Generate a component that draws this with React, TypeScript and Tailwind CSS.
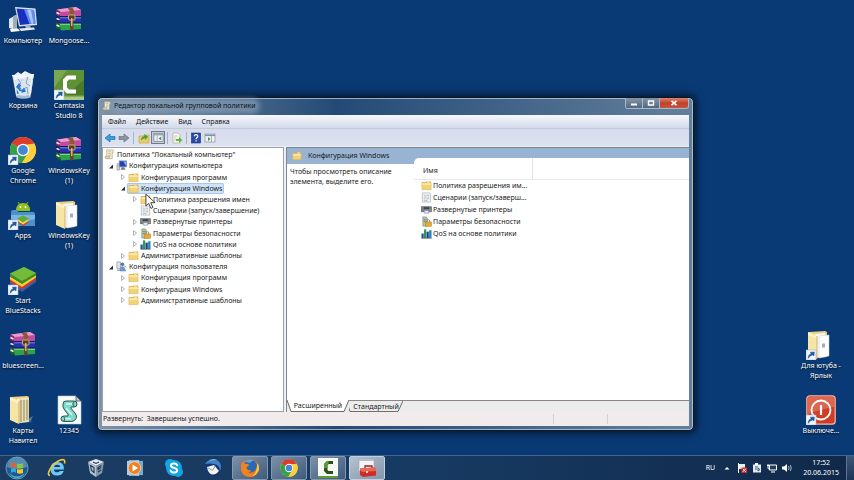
import React from "react";

type IconProps = { className?: string };

/* ---------- desktop icons (30 x 30 art boards) ---------- */

function ShortcutArrow({ x = 0, y = 20 }: { x?: number; y?: number }) {
  return (
    <g transform={`translate(${x} ${y})`}>
      <rect width="10" height="10" fill="#f2f6fb" stroke="#a9b7c9" strokeWidth=".6" />
      <path d="M2.200 8.400C2 5.600 3.400 4.100 5.200 4L4.400 2.200 8.300 2 8 6 6.800 4.900C4.900 5.300 3.600 6.300 2.200 8.400Z" fill="#1e5a9e" stroke="#1e5a9e" strokeWidth=".5" />
    </g>
  );
}

function ComputerIcon({ className }: IconProps) {
  return (
    <svg viewBox="0 0 30 30" className={className} aria-hidden="true">
      <path d="M1 14l7-4v15l-7-2z" fill="#dfe6ec" />
      <path d="M5 11l4-1v14l-4 0z" fill="#9eabb8" />
      <path d="M7 2l20.500 1.500L29 20l-18 1.500z" fill="#dbe4ec" />
      <path d="M8.500 3.500L26 5l1.500 13.500L12 20z" fill="#1a2fc0" />
      <path d="M16 4.200L26 5l1.500 13.500-6 .6z" fill="#5f8df0" />
      <path d="M19 4.500l4 .3 2.600 13.900-2 .2z" fill="#a9c6fb" />
      <path d="M17 21l5-.5 1 3h-5z" fill="#aab4be" />
      <path d="M11 23.500l15-1 1 2-14 1.500z" fill="#e6ebef" />
      <path d="M2 24l8-.5 2 2.500-9 1z" fill="#f5f7f9" />
    </svg>
  );
}

function RarIcon({ className }: IconProps) {
  return (
    <svg viewBox="0 0 30 30" className={className} aria-hidden="true">
      <path d="M3 4.500L22 2l5 3v6H5z" fill="#c24a9f" />
      <path d="M3 4.500L22 2l5 3L7 7z" fill="#ec9cd0" />
      <path d="M2 4.500l4 2V12l-4-2z" fill="#7a2668" />
      <path d="M5 12h22v5.500H5z" fill="#2a2fb8" />
      <path d="M5 12h22v1.300H5z" fill="#7d86ee" />
      <path d="M2 10.500l4 2v5l-4-1.500z" fill="#191d70" />
      <path d="M5 18.500h22v5.500l-20 1.500z" fill="#2ea24a" />
      <path d="M5 18.500h22v1.300H5z" fill="#8adf92" />
      <path d="M2 17l4 2v6.500L2 23z" fill="#15601f" />
      <path d="M2.500 7.500l3 1.500M2.500 13.500l3 1.200M2.500 20l3 1.500" stroke="#f0e8f0" strokeWidth="1.600" />
      <path d="M5.500 11.800H27M5.500 18H27" stroke="#17132e" strokeWidth=".8" />
      <path d="M13.500 3.200l5-.7 1.500 3V11l-4.500 1V5.500z" fill="#8a5a34" />
      <path d="M16 12l3.500-1v14l-3.500.4z" fill="#6b4526" />
      <rect x="14.500" y="10" width="6.500" height="5" rx="1" fill="#5a3c20" stroke="#d3b98a" strokeWidth=".9" />
      <path d="M17.800 13v8" stroke="#ead9ac" strokeWidth="1.100" />
    </svg>
  );
}

function BinIcon({ className }: IconProps) {
  return (
    <svg viewBox="0 0 30 30" className={className} aria-hidden="true">
      <path d="M4 5l22-1-3.500 23.500q-7 2.500-14 0z" fill="#b7c9dc" opacity=".9" />
      <path d="M5 6l5-4 3 2 4-3 4 2 5 2-1 4-19 1z" fill="#eef3f8" />
      <path d="M6 11l5-3 3 3 4-4 7 3-2 14-6 2-8-1z" fill="#dbe5ef" />
      <path d="M10 9l3 4-4 3M20 7l-2 6 4 3M14 20l5-3 1 7" stroke="#8ba0b5" strokeWidth="1" fill="none" />
      <path d="M8 17l3-4 2.500 3-1.500.6 1 2.400-2 1zM16 17.500l2 4-4.500 1.500.3-1.500-2.800-.5.500-2 3 .7zM8.500 19l2.500 4.500-2 .5z" fill="#2b78d0" />
      <path d="M4 5.500q11 3 22-1" stroke="#f8fbfd" strokeWidth="1.200" fill="none" />
      <path d="M6 8l2.500 18M24 7.500L21.500 26" stroke="#f6f9fc" strokeWidth=".8" />
    </svg>
  );
}

function CamtasiaIcon({ className }: IconProps) {
  return (
    <svg viewBox="0 0 30 30" className={className} aria-hidden="true">
      <rect width="30" height="30" fill="#5f9136" />
      <path d="M0 0h13L0 18z" fill="#7aa651" />
      <path d="M30 10v15H12z" fill="#4c7a2a" />
      <path d="M22 5.500H13l-4 4v10l4 4h9v-4h-7l-2-2v-6l2-2h7z" fill="#fff" />
      <rect y="26.500" width="30" height="3.500" fill="#a9c98c" />
      <ShortcutArrow />
    </svg>
  );
}

function ChromeMark() {
  return (
    <g>
      <circle cx="15" cy="15" r="13" fill="#fbd03b" />
      <path d="M15 15L3.740 8.500A13 13 0 0 1 26.260 8.500L26.200 9.500H15Z" fill="#dd3b2c" />
      <path d="M3.740 8.500A13 13 0 0 0 14 28L20 18 15 15z" fill="#35a14a" />
      <path d="M26.260 8.500A13 13 0 0 1 14 28L20.200 18 20 9.500z" fill="#fbd03b" />
      <circle cx="15" cy="15" r="6.200" fill="#fff" />
      <circle cx="15" cy="15" r="4.900" fill="#4286d6" />
    </g>
  );
}

function ChromeDesktopIcon({ className }: IconProps) {
  return (
    <svg viewBox="0 0 30 30" className={className} aria-hidden="true">
      <ChromeMark />
      <ShortcutArrow />
    </svg>
  );
}

function AppsIcon({ className }: IconProps) {
  return (
    <svg viewBox="0 0 30 30" className={className} aria-hidden="true">
      <path d="M8 11q0-8 7-8t7 8z" fill="#93c021" />
      <path d="M10 2l2 3M20 2l-2 3" stroke="#93c021" strokeWidth="1" />
      <circle cx="12.500" cy="7" r=".9" fill="#fff" />
      <circle cx="17.500" cy="7" r=".9" fill="#fff" />
      <path d="M3 12q0-2 2-2h4l1 2h15q2 0 2 2v12H3z" fill="#4a92c9" />
      <path d="M3 15h24v4q-12 4-24 0z" fill="#78b5df" />
      <path d="M9 22l6-3 6 3-6 4z" fill="#d3402e" />
      <path d="M9 20.500l6-3 6 3-6 4z" fill="#f5d84b" />
      <path d="M9 18.500l6-3 6 3-6 4z" fill="#5fab33" />
      <ShortcutArrow />
    </svg>
  );
}

function OpenFolder({ arrow = false, full = false, className }: IconProps & { arrow?: boolean; full?: boolean }) {
  return (
    <svg viewBox="0 0 30 30" className={className} aria-hidden="true">
      <path d="M3 2l16-1 2 1v25l-13 1z" fill="#ecd27c" />
      <path d="M9 4l10-1v23l-9 2z" fill="#f7f8fa" />
      {full ? (
        <g>
          <path d="M11 4l9-1v24l-9 1z" fill="#e9dfb8" />
          <path d="M13 5v22M16 5v21M19 5v20" stroke="#9a8a63" strokeWidth="1.100" />
          <path d="M20 24l5-3-3 7z" fill="#9fb6cf" opacity=".5" />
        </g>
      ) : (
        <g>
          <path d="M13 6l10-1v21l-10 2z" fill="#fdfdfd" stroke="#c5ccd4" strokeWidth=".5" />
          <path d="M16 13.500h3v4h-3z" fill="#9dacbe" />
        </g>
      )}
      <path d="M2 2l9 4v23l-9-4z" fill="#f6e5a4" />
      <path d="M2 2l9 4v3L2 5z" fill="#fcf3c8" />
      <path d="M11 6v23" stroke="#c7a44b" strokeWidth=".8" />
      {arrow && <ShortcutArrow />}
    </svg>
  );
}

function BlueStacksIcon({ className }: IconProps) {
  return (
    <svg viewBox="0 0 30 30" className={className} aria-hidden="true">
      <path d="M2 16l12 7 14-9v3L14 27 2 19z" fill="#2b63b5" />
      <path d="M2 14l12 7 14-9v3L14 24.500 2 17z" fill="#d53427" />
      <path d="M2 11.500l12 7 14-9v3L14 22 2 14.500z" fill="#f5cf32" />
      <path d="M2 8.500L16 2l12 6v2.500L14 19 2 11.500z" fill="#3f8b2b" />
      <path d="M2 8.500L16 2l12 6-14 8z" fill="#75bb3a" />
      <ShortcutArrow />
    </svg>
  );
}

function ScriptIcon({ className }: IconProps) {
  return (
    <svg viewBox="0 0 30 30" className={className} aria-hidden="true">
      <path d="M4 1h18l5 5v23H4z" fill="#fafcfc" stroke="#bcc6cc" strokeWidth=".6" />
      <path d="M22 1v5h5z" fill="#c8d2da" stroke="#3b4750" strokeWidth=".8" />
      <path d="M9 9q0-3 3-3h8q3 0 3 3t-3 3h-3q-1 .5 1 2.500l3 3.500q2.500 3 1 5.500-1.500 3-4.500 3H10q-3 0-3-2.800t3-2.700h4q1-.8-1-3l-3-4q-1.500-2-1-5z" fill="#7fd8cc" stroke="#15463f" strokeWidth=".9" />
      <path d="M12 9h6M12 13l6 7M11 23.700h6" stroke="#d9fbf5" strokeWidth="1.300" />
      <path d="M20 6.500q-2.500 2 0 5M9.500 21.500q2.500 1.500.5 4.500" stroke="#15463f" strokeWidth=".8" fill="none" />
    </svg>
  );
}

function PowerIcon({ className }: IconProps) {
  return (
    <svg viewBox="0 0 30 30" className={className} aria-hidden="true">
      <rect x=".8" y=".8" width="28.400" height="28.400" rx="3" fill="#cf3d27" stroke="#f3b7a7" strokeWidth="1.200" />
      <path d="M2 3q0-1.500 1.500-1.500h23Q28 1.500 28 3v9Q15 14 2 19z" fill="#dc6650" />
      <circle cx="15" cy="15" r="9.500" fill="none" stroke="#fff" strokeWidth="1.800" />
      <path d="M15 10v10" stroke="#fff" strokeWidth="2.200" />
      <ShortcutArrow />
    </svg>
  );
}

/* ---------- console icons (12 x 12 art boards) ---------- */

function FolderIcon({ className }: IconProps) {
  return (
    <svg viewBox="0 0 12 12" className={className} aria-hidden="true">
      <path d="M1 2.500h4l1-1h5v2H1z" fill="#d9ab45" />
      <path d="M1 3h10v7.500H1z" fill="#f3d377" stroke="#d9b052" strokeWidth=".6" />
      <path d="M1.500 3.500h9v2h-9z" fill="#fbe9ae" />
      <path d="M6.500 1.800h3v1h-3z" fill="#fff6d8" />
    </svg>
  );
}

function ScrollIcon({ className }: IconProps) {
  return (
    <svg viewBox="0 0 12 12" className={className} aria-hidden="true">
      <path d="M3 1h7v3H9v6.500H2V8h1z" fill="#f4eed8" stroke="#a69d80" strokeWidth=".7" />
      <path d="M4.500 3h3M4.500 5h3M4.500 7h3" stroke="#b5a982" strokeWidth=".7" />
      <path d="M1 8h5v2.500H2q-1-.5-1-2.500z" fill="#dfd4ae" stroke="#a69d80" strokeWidth=".5" />
    </svg>
  );
}

function PcConfigIcon({ className }: IconProps) {
  return (
    <svg viewBox="0 0 12 12" className={className} aria-hidden="true">
      <path d="M1 4h3v7H1z" fill="#c8d0d8" stroke="#6d7883" strokeWidth=".5" />
      <rect x="3.500" y="1" width="8" height="6.500" fill="#2343b8" stroke="#8494ac" strokeWidth=".8" />
      <path d="M8 1.500h3v5z" fill="#8fb2f2" />
      <path d="M6 8h3l1.500 2.500H5z" fill="#717e8d" />
    </svg>
  );
}

function UserConfigIcon({ className }: IconProps) {
  return (
    <svg viewBox="0 0 12 12" className={className} aria-hidden="true">
      <rect x="1" y="1" width="4" height="7" fill="#dce3ea" stroke="#75828f" strokeWidth=".6" />
      <circle cx="7" cy="3.500" r="2" fill="#5d7898" />
      <path d="M4.500 11q0-5 2.500-5t3.500 5z" fill="#6f9bd2" stroke="#4b688b" strokeWidth=".4" />
      <path d="M9 5l2 2M1 10h4" stroke="#5f6f80" strokeWidth=".9" />
    </svg>
  );
}

function DocScriptIcon({ className }: IconProps) {
  return (
    <svg viewBox="0 0 12 12" className={className} aria-hidden="true">
      <path d="M1.500 1h8l1 1v9h-9z" fill="#f5f6f6" stroke="#a5abb0" strokeWidth=".7" />
      <path d="M3 3.500h2M6 3.500h3M3 5.500h3M7 5.500h2M3 7.500h2M6 7.500h3M3 9.500h4" stroke="#9ba4ab" strokeWidth=".8" />
    </svg>
  );
}

function PrinterIcon({ className }: IconProps) {
  return (
    <svg viewBox="0 0 12 12" className={className} aria-hidden="true">
      <rect x=".5" y="3" width="11" height="5.500" fill="#7d848c" stroke="#4b5158" strokeWidth=".6" />
      <path d="M3 3.500h6v2H3z" fill="#3c4248" />
      <path d="M3.500 7h5v3h-5z" fill="#dfe8f2" stroke="#5c6c7e" strokeWidth=".5" />
      <path d="M9.500 7h1" stroke="#8fe07a" strokeWidth=".8" />
    </svg>
  );
}

function SecurityIcon({ className }: IconProps) {
  return (
    <svg viewBox="0 0 12 12" className={className} aria-hidden="true">
      <path d="M2 1h4l1 2v8H2z" fill="#b9c3ae" stroke="#6f7b66" strokeWidth=".6" />
      <path d="M3 4h3M3 6h2" stroke="#5d7750" strokeWidth=".8" />
      <path d="M6.500 7V5.500q0-1.500 1.500-1.500t1.500 1.500V7" fill="none" stroke="#8b8b8b" strokeWidth="1" />
      <rect x="5" y="6.500" width="6.500" height="4.800" fill="#e2ac33" stroke="#a97718" strokeWidth=".5" />
    </svg>
  );
}

function ChartIcon({ className }: IconProps) {
  return (
    <svg viewBox="0 0 12 12" className={className} aria-hidden="true">
      <path d="M.5 6H3v5H.5z" fill="#2a51a8" />
      <path d="M3.300 1.500h2.400V11H3.300z" fill="#2d9c46" />
      <path d="M6 4h2.500v7H6z" fill="#243c9c" />
      <path d="M8.800 2.500h2.700V11H8.800z" fill="#2689b5" />
      <path d="M.5 11.200h11" stroke="#222b39" strokeWidth=".6" />
    </svg>
  );
}

/* ---------- data ---------- */

type Icon = (p: IconProps) => React.ReactElement;
type DesktopItem = { label: string[]; icon: Icon } | null;

const FolderDoc: Icon = (p) => <OpenFolder {...p} />;
const FolderFull: Icon = (p) => <OpenFolder full {...p} />;
const FolderLink: Icon = (p) => <OpenFolder arrow {...p} />;

const desktopLeft: DesktopItem[] = [
  { label: ["Компьютер"], icon: ComputerIcon },
  { label: ["Mongoose..."], icon: RarIcon },
  { label: ["Корзина"], icon: BinIcon },
  { label: ["Camtasia", "Studio 8"], icon: CamtasiaIcon },
  { label: ["Google", "Chrome"], icon: ChromeDesktopIcon },
  { label: ["WindowsKey", "(1)"], icon: RarIcon },
  { label: ["Apps"], icon: AppsIcon },
  { label: ["WindowsKey", "(1)"], icon: FolderDoc },
  { label: ["Start", "BlueStacks"], icon: BlueStacksIcon },
  null,
  { label: ["bluescreen..."], icon: RarIcon },
  null,
  { label: ["Карты", "Навител"], icon: FolderFull },
  { label: ["12345"], icon: ScriptIcon },
];

const desktopRight: DesktopItem[] = [
  { label: ["Для ютуба -", "Ярлык"], icon: FolderLink },
  { label: ["Выключе..."], icon: PowerIcon },
];

type Node = { level: 0 | 1 | 2 | 3; label: string; icon: Icon; state?: "open" | "closed"; selected?: boolean };

const tree: Node[] = [
  { level: 0, label: 'Политика "Локальный компьютер"', icon: ScrollIcon },
  { level: 1, label: "Конфигурация компьютера", icon: PcConfigIcon, state: "open" },
  { level: 2, label: "Конфигурация программ", icon: FolderIcon, state: "closed" },
  { level: 2, label: "Конфигурация Windows", icon: FolderIcon, state: "open", selected: true },
  { level: 3, label: "Политика разрешения имен", icon: FolderIcon, state: "closed" },
  { level: 3, label: "Сценарии (запуск/завершение)", icon: DocScriptIcon },
  { level: 3, label: "Развернутые принтеры", icon: PrinterIcon, state: "closed" },
  { level: 3, label: "Параметры безопасности", icon: SecurityIcon, state: "closed" },
  { level: 3, label: "QoS на основе политики", icon: ChartIcon, state: "closed" },
  { level: 2, label: "Административные шаблоны", icon: FolderIcon, state: "closed" },
  { level: 1, label: "Конфигурация пользователя", icon: UserConfigIcon, state: "open" },
  { level: 2, label: "Конфигурация программ", icon: FolderIcon, state: "closed" },
  { level: 2, label: "Конфигурация Windows", icon: FolderIcon, state: "closed" },
  { level: 2, label: "Административные шаблоны", icon: FolderIcon, state: "closed" },
];

const indent = { 0: "pl-0", 1: "pl-1", 2: "pl-4", 3: "pl-7" };

const listRows: { label: string; icon: Icon }[] = [
  { label: "Политика разрешения им...", icon: FolderIcon },
  { label: "Сценарии (запуск/заверш...", icon: DocScriptIcon },
  { label: "Развернутые принтеры", icon: PrinterIcon },
  { label: "Параметры безопасности", icon: SecurityIcon },
  { label: "QoS на основе политики", icon: ChartIcon },
];

/* ---------- desktop ---------- */

function DesktopShortcut({ item }: { item: DesktopItem }) {
  if (!item) return <span />;
  const Glyph = item.icon;
  return (
    <button type="button" className="flex h-[65px] flex-col items-center pt-[5px]">
      <Glyph className="size-[30px] shrink-0" />
      <span className="mt-px text-center leading-[10px] whitespace-nowrap text-white [text-shadow:0_1px_2px_#000]">
        {item.label.map((line) => (
          <span key={line} className="block">{line}</span>
        ))}
      </span>
    </button>
  );
}

/* ---------- console window ---------- */

function TitleBar() {
  return (
    <header className="flex h-[17px] shrink-0 items-start justify-between">
      <div className="flex h-[15px] items-center gap-px">
        <ScrollIcon className="size-[10px]" />
        <h1 className="rounded-full bg-[#8ea3bb]/60 px-px leading-[10px] text-[#0c1420] shadow-[0_0_5px_3px_rgba(142,163,187,0.6)]">
          Редактор локальной групповой политики
        </h1>
      </div>
      <div className="flex h-[11px] overflow-hidden rounded-b-[3px] border border-t-0 border-[#a9b8c8]">
        <button type="button" aria-label="Свернуть" className="flex w-[17px] items-center justify-center border-r border-[#a9b8c8] bg-linear-to-b from-[#8395ab] to-[#53687f]">
          <svg viewBox="0 0 8 6" className="h-[6px] w-[8px]"><path d="M1 3.500h6v2H1z" fill="#fff" /></svg>
        </button>
        <button type="button" aria-label="Развернуть" className="flex w-[17px] items-center justify-center border-r border-[#a9b8c8] bg-linear-to-b from-[#8395ab] to-[#53687f]">
          <svg viewBox="0 0 8 6" className="h-[6px] w-[8px]"><path d="M1.500 1h5v4h-5z" fill="none" stroke="#fff" strokeWidth="1.400" /></svg>
        </button>
        <button type="button" aria-label="Закрыть" className="flex w-[28px] items-center justify-center bg-linear-to-b from-[#d98473] via-[#c0412c] to-[#c9553f]">
          <svg viewBox="0 0 8 6" className="h-[6px] w-[8px]"><path d="M1.500.8l5 4.400M6.500.8l-5 4.400" stroke="#fff" strokeWidth="1.600" /></svg>
        </button>
      </div>
    </header>
  );
}

function MenuBar() {
  return (
    <nav className="flex h-[14px] shrink-0 items-center gap-[10px] border-b border-[#c3cadb] bg-linear-to-b from-[#f6f8fc] to-[#d3daea] pl-[6px] leading-[12px] text-[#111]">
      {["Файл", "Действие", "Вид", "Справка"].map((m) => (
        <button type="button" key={m}>{m}</button>
      ))}
    </nav>
  );
}

function Divider() {
  return <span className="mx-[2px] h-[12px] w-px bg-[#a9b1c3]" />;
}

function ToolBar() {
  return (
    <div role="toolbar" className="flex h-[17px] shrink-0 items-center bg-linear-to-b from-[#d6dcec] to-[#dde2f0]">
      <button type="button" aria-label="Назад" className="flex w-[15px] justify-center">
        <svg viewBox="0 0 12 12" className="size-[12px]"><path d="M1 6l5-4v2.500h5v3H6V10z" fill="#38a0dd" stroke="#1d6fab" strokeWidth=".7" /></svg>
      </button>
      <button type="button" aria-label="Вперёд" className="flex w-[14px] justify-center">
        <svg viewBox="0 0 12 12" className="size-[12px]"><path d="M11 6L6 2v2.500H1v3h5V10z" fill="#8b94a0" stroke="#69727e" strokeWidth=".7" /></svg>
      </button>
      <Divider />
      <button type="button" aria-label="Вверх" className="flex w-[15px] justify-center">
        <svg viewBox="0 0 12 12" className="size-[12px]">
          <path d="M1 4h4l1-1h5v8H1z" fill="#eccb6c" stroke="#c39d3e" strokeWidth=".6" />
          <path d="M3 8.500q0-4 3.500-4.500L6 2l4 2.500L7.500 8 7 6.300Q5 6.500 3 8.500z" fill="#49a534" />
        </svg>
      </button>
      <button type="button" aria-label="Дерево консоли" aria-pressed="true" className="flex h-[13px] w-[14px] items-center justify-center border border-[#71798a] bg-[#c6ccd9]">
        <svg viewBox="0 0 12 12" className="size-[11px]">
          <rect x="1" y="1.500" width="10" height="9" fill="#eef1f6" stroke="#788191" strokeWidth=".8" />
          <path d="M1 3h10" stroke="#98a3b5" strokeWidth="1.500" />
          <path d="M4.500 4v6" stroke="#9099a8" strokeWidth=".7" />
          <path d="M9 5v4L6 7z" fill="#4a9a3c" />
        </svg>
      </button>
      <Divider />
      <button type="button" aria-label="Экспорт списка" className="flex w-[14px] justify-center">
        <svg viewBox="0 0 12 12" className="size-[12px]">
          <path d="M2 1h5l2 2v8H2z" fill="#fbfaf0" stroke="#a3a48f" strokeWidth=".6" />
          <path d="M3 4h4M3 6h2M3 8h2" stroke="#b7b69a" strokeWidth=".7" />
          <path d="M5 7h3V5l3.500 3L8 11V9H5z" fill="#60b846" />
        </svg>
      </button>
      <Divider />
      <button type="button" aria-label="Справка" className="flex w-[14px] justify-center">
        <svg viewBox="0 0 12 12" className="size-[12px]">
          <rect x="1.500" y="1" width="9" height="10" fill="#2d49a8" stroke="#172e77" strokeWidth=".6" />
          <path d="M4.300 4.300q.1-1.600 1.800-1.600t1.700 1.500q0 1-1 1.600-.7.500-.7 1.400M6.100 8.300v1.300" stroke="#fff" strokeWidth="1.200" fill="none" />
        </svg>
      </button>
      <button type="button" aria-label="Область действий" className="flex w-[14px] justify-center">
        <svg viewBox="0 0 12 12" className="size-[12px]">
          <rect x="1" y="2" width="10" height="8" fill="#eef1f6" stroke="#8c95a4" strokeWidth=".7" />
          <path d="M1 3.300h10" stroke="#7e8fae" strokeWidth="1.500" />
          <path d="M7.500 4v6" stroke="#9099a8" strokeWidth=".7" />
          <path d="M4 5v4l2.500-2z" fill="#4a9a3c" />
        </svg>
      </button>
    </div>
  );
}

function Twisty({ state }: { state?: "open" | "closed" }) {
  return (
    <svg viewBox="0 0 8 8" className="size-[8px] shrink-0" aria-hidden="true">
      {state === "open" && <path d="M6 2.500v4H2z" fill="#2b2b2b" />}
      {state === "closed" && <path d="M2.500 1.500v5L5.500 4z" fill="#fff" stroke="#a0a0a0" strokeWidth=".8" />}
    </svg>
  );
}

function TreePane() {
  return (
    <section className="w-[182px] shrink-0 border border-[#9a9fa8] bg-white pt-px">
      <ul role="tree" className="grid h-[157px] grid-rows-14 leading-[11px]">
        {tree.map((n, i) => {
          const Glyph = n.icon;
          return (
            <li key={i} role="treeitem" aria-selected={!!n.selected} className={`flex items-center ${indent[n.level]}`}>
              {n.level > 0 && <Twisty state={n.state} />}
              <span className={n.selected ? "flex items-center rounded-xs bg-[#cfe3f8] pr-[2px] ring-1 ring-[#a5c8ec] ring-inset" : "flex items-center pr-[2px]"}>
                <Glyph className="mr-[2px] ml-px size-[11px] shrink-0" />
                <span className="whitespace-nowrap">{n.label}</span>
              </span>
            </li>
          );
        })}
      </ul>
    </section>
  );
}

function ResultPane() {
  return (
    <section className="ml-[2px] flex min-w-0 flex-1 flex-col border-t border-l border-[#7d8590] bg-white">
      <div className="flex min-h-0 flex-1 bg-linear-to-b from-[#98b4d2] from-[16px] to-white to-[16px]">
        <div className="w-[127px] shrink-0">
          <h2 className="flex h-[16px] items-center gap-[6px] pl-[5px] leading-[12px] whitespace-nowrap">
            <FolderIcon className="size-[10px]" />
            Конфигурация Windows
          </h2>
          <p className="px-[3px] pt-[3px] leading-[10px]">
            Чтобы просмотреть описание элемента, выделите его.
          </p>
        </div>
        <div className="mt-[10px] min-w-0 flex-1 rounded-tl-[5px] bg-white">
          <table className="w-full table-fixed border-collapse leading-[12px]">
            <thead>
              <tr className="h-[21px] border-b border-[#e6e8ec]">
                <th scope="col" className="w-[118px] border-r border-[#e1e4e9] pt-[6px] pl-[9px] text-left font-normal">Имя</th>
                <th aria-hidden="true" />
              </tr>
            </thead>
            <tbody>
              {listRows.map(({ label, icon: Glyph }) => (
                <tr key={label} className="h-[12px]">
                  <td className="p-0 pl-[7px]">
                    <span className="flex items-center gap-px whitespace-nowrap">
                      <Glyph className="size-[11px] shrink-0" />
                      {label}
                    </span>
                  </td>
                  <td />
                </tr>
              ))}
            </tbody>
          </table>
        </div>
      </div>
      <div role="tablist" className="flex h-[12px] shrink-0 bg-[#ececec] leading-[12px]">
        <button type="button" role="tab" aria-selected="true" className="relative flex w-[62px] items-center justify-center">
          <svg viewBox="0 0 62 12" preserveAspectRatio="none" className="absolute inset-0 h-full w-full" aria-hidden="true">
            <path d="M0 0l4 11.500h53L62 0z" fill="#fff" />
            <path d="M0 0l4 11.500h53L62 0" fill="none" stroke="#444" strokeWidth=".8" />
          </svg>
          <span className="relative">Расширенный</span>
        </button>
        <button type="button" role="tab" aria-selected="false" className="relative flex w-[54px] items-center justify-center border-t border-[#888]">
          <svg viewBox="0 0 54 12" preserveAspectRatio="none" className="absolute inset-0 h-full w-full" aria-hidden="true">
            <path d="M-1 5l2 6.500h48L54 0" fill="none" stroke="#444" strokeWidth=".8" />
          </svg>
          <span className="relative">Стандартный</span>
        </button>
        <span className="flex-1 border-t border-[#888]" />
      </div>
    </section>
  );
}

function ConsoleWindow() {
  return (
    <main className="absolute top-[97px] right-[160px] bottom-[24px] left-[97px] flex flex-col rounded-[5px] border border-[#10181f] bg-linear-to-r from-[#7f93a8] via-[#234a76] via-40% to-[#64809c] p-[4px] pt-0 shadow-[0_0_7px_3px_rgba(0,0,0,0.55),inset_0_0_0_1px_rgba(190,210,228,0.75)]">
      <TitleBar />
      <div className="flex min-h-0 flex-1 flex-col bg-[#eef0f5] text-[#1a1a1a]">
        <MenuBar />
        <ToolBar />
        <div className="flex min-h-0 flex-1 pt-px">
          <TreePane />
          <ResultPane />
        </div>
        <footer className="flex h-[14px] shrink-0 items-center bg-[#f1ebec] leading-[12px]">
          <p className="flex-1 pl-px whitespace-pre">Развернуть:  Завершены успешно.</p>
          <span className="h-[10px] w-[54px] border-l border-[#d3cfd2]" />
          <span className="h-[10px] w-[82px] border-l border-[#d3cfd2]" />
        </footer>
      </div>
    </main>
  );
}

/* ---------- taskbar ---------- */

function StartOrb() {
  return (
    <svg viewBox="0 0 24 24" className="size-[24px]" aria-hidden="true">
      <circle cx="12" cy="12" r="11" fill="#1d5a8c" stroke="#6f9cc0" strokeWidth="1" />
      <path d="M2 11a10 10 0 0 1 20 0q-10 4-20 0z" fill="#6ba3c8" opacity=".7" />
      <path d="M4 17q8 7 16 0-3 5-8 5t-8-5z" fill="#4fd0ee" opacity=".8" />
      <path d="M6 7.500q2.500-1.500 5-.2v4.200q-2.500-1.200-5 .2z" fill="#e8602c" />
      <path d="M12 7.600q3 1 6-.4v4.500q-3 1.300-6 .2z" fill="#8cc63f" />
      <path d="M6 12.700q2.500-1.400 5-.2v4.300q-2.500-1.400-5 .1z" fill="#38a4e4" />
      <path d="M12 12.900q3 1.100 6-.2v4.200q-3 1.500-6 .2z" fill="#fbc62d" />
    </svg>
  );
}

function IeIcon() {
  return (
    <svg viewBox="0 0 20 20" className="size-[20px]" aria-hidden="true">
      <path d="M17 11.400H7q.2 2.900 3.200 2.900 1.900 0 2.600-1.200h3.900Q15.200 17.600 10.200 17.600 3.500 17.600 3.500 10.800T10.200 4q7 0 6.800 7.400zM7.100 9h6.200Q13 6.700 10.200 6.700T7.100 9z" fill="#6ccaf4" />
      <path d="M3 17.500Q-.5 17 3.500 10.500 8 4 13.500 2q5.500-1.500 4 3.500" fill="none" stroke="#f2c534" strokeWidth="1.600" />
    </svg>
  );
}

function CubeIcon() {
  return (
    <svg viewBox="0 0 20 20" className="size-[20px]" aria-hidden="true">
      <path d="M2 4l8-3 8 3-8 4z" fill="#e3e9ee" />
      <path d="M2 4l8 4v11l-6-4z" fill="#b4c0cb" />
      <path d="M18 4l-8 4v11l6-4z" fill="#8797a7" />
      <path d="M4.500 7.500l3.500 2v5l-2.500-2zM15.500 7.500L12 9.500v2l3-2M12 14l3-2M7 4l3 1.500L13 4" fill="none" stroke="#1f3a5c" strokeWidth="1.100" />
    </svg>
  );
}

function PlayerIcon() {
  return (
    <svg viewBox="0 0 20 20" className="size-[20px]" aria-hidden="true">
      <path d="M4 2l14 1v14l-14 1z" fill="#79a9cf" />
      <path d="M2 3l12-1v16l-12-1z" fill="#a9cbe4" />
      <circle cx="9.500" cy="10" r="6.300" fill="#ee7f22" stroke="#f8d3a8" strokeWidth=".8" />
      <path d="M7.500 6.500v7l5.500-3.500z" fill="#fff" />
    </svg>
  );
}

function SkypeIcon() {
  return (
    <svg viewBox="0 0 20 20" className="size-[20px]" aria-hidden="true">
      <circle cx="10" cy="10" r="8" fill="#12a5e5" />
      <circle cx="6" cy="6" r="5" fill="#12a5e5" />
      <circle cx="14" cy="14" r="5" fill="#12a5e5" />
      <path d="M13.200 7.300Q12.500 5.500 10 5.500 6.900 5.500 6.900 7.600q0 1.700 3.100 2.300t3.200 2.400q0 2.300-3.200 2.300-2.800 0-3.400-2.100" fill="none" stroke="#fff" strokeWidth="2" strokeLinecap="round" />
    </svg>
  );
}

function ThunderbirdIcon() {
  return (
    <svg viewBox="0 0 20 20" className="size-[20px]" aria-hidden="true">
      <circle cx="10.500" cy="9.500" r="8.500" fill="#16376f" />
      <path d="M2 6q5-7 12-4 6 4 3 11 0-6-6-7-4-1-9 0z" fill="#3f83cd" />
      <path d="M6 3q4-3 8-1-5 0-8 1z" fill="#9cc6ee" />
      <path d="M4 9l7-2 5 6q-3 4-7 3.500-4-1-5-7.500z" fill="#f1f3f5" />
      <path d="M5 10l4.500 2.500L12 8" fill="none" stroke="#8d98a6" strokeWidth="1" />
      <path d="M16 13q1 5-6 5 5-1 6-5z" fill="#0d2b61" />
    </svg>
  );
}

function FirefoxIcon() {
  return (
    <svg viewBox="0 0 20 20" className="size-[20px]" aria-hidden="true">
      <circle cx="10" cy="10" r="9" fill="#e8731d" />
      <circle cx="10.500" cy="8" r="6.500" fill="#2b69b5" />
      <path d="M5 4q4-4 9-1.500-3 0-4 2.500-3-1-5-1z" fill="#5ca5dd" />
      <path d="M1.500 5l2-2q0 2 1.500 3 3-.5 4 .8Q9 8.500 6.500 9q.5 4 5 3.500-2 3-5.500 1.500 5 4 10-1 2-3 1-8 3 3 1.500 8-3 6-8.500 6-7 0-8.800-6.500Q.6 8 1.500 5z" fill="#ef8420" />
      <path d="M17 5q3 3 1.500 8-2 4-6 5.300 5-4.300 4.500-13.300z" fill="#f9c938" />
    </svg>
  );
}

function ChromeTaskIcon() {
  return (
    <svg viewBox="0 0 30 30" className="size-[20px]" aria-hidden="true">
      <ChromeMark />
    </svg>
  );
}

function CamtasiaTaskIcon() {
  return (
    <svg viewBox="0 0 20 20" className="size-[20px]" aria-hidden="true">
      <rect width="20" height="20" fill="#f6f9f3" />
      <path d="M15 3H9L6 6v7l3 3h6v-3h-4.500L9.500 12V7l1-1H15z" fill="#27521a" />
      <path d="M9 3L6 6v4h3.500V7l1-1V3z" fill="#5c9a33" />
      <path d="M0 18h20v2H0z" fill="#5f9a33" />
    </svg>
  );
}

function ToolboxIcon() {
  return (
    <svg viewBox="0 0 20 20" className="size-[20px]" aria-hidden="true">
      <path d="M2 1h15v12H2z" fill="#f2f4f7" stroke="#9ea8b4" strokeWidth=".6" />
      <path d="M2 1h15v2H2z" fill="#b3bfcd" />
      <path d="M8 10V8h7v2" fill="none" stroke="#a31c18" strokeWidth="1.300" />
      <path d="M3 10.500l14-1 2 1.500v6.500L6 19l-3-2z" fill="#cf2c25" />
      <path d="M3 10.500l14-1 2 1.500v2L6 14l-3-1.500z" fill="#e8685c" />
      <path d="M9 13h2v2H9z" fill="#f0d9d5" />
    </svg>
  );
}

const pinned = [
  { name: "Internet Explorer", glyph: <IeIcon /> },
  { name: "VirtualBox", glyph: <CubeIcon /> },
  { name: "Media Player", glyph: <PlayerIcon /> },
  { name: "Skype", glyph: <SkypeIcon /> },
  { name: "Thunderbird", glyph: <ThunderbirdIcon /> },
];

const running = [
  { name: "Firefox", glyph: <FirefoxIcon />, active: false },
  { name: "Chrome", glyph: <ChromeTaskIcon />, active: false },
  { name: "Camtasia", glyph: <CamtasiaTaskIcon />, active: false },
  { name: "Консоль управления", glyph: <ToolboxIcon />, active: true },
];

function Taskbar() {
  return (
    <footer className="flex h-[25px] shrink-0 items-center border-t border-[#44658a] bg-linear-to-r from-[#1b3c62] via-[#173a62] to-[#10294a] text-white">
      <button type="button" aria-label="Пуск" className="ml-[5px] flex w-[32px] justify-start"><StartOrb /></button>
      {pinned.map((p) => (
        <button type="button" key={p.name} aria-label={p.name} className="flex w-[39px] justify-center">{p.glyph}</button>
      ))}
      <div className="flex h-full gap-[3px]">
        {running.map((r) => (
          <button
            type="button"
            key={r.name}
            aria-label={r.name}
            className={
              r.active
                ? "flex w-[36px] items-center justify-center rounded-xs border border-[#c3cfdc] bg-linear-to-br from-[#b4c1d0] to-[#8496ab]"
                : "flex w-[36px] items-center justify-center rounded-xs border border-[#8599b0] bg-linear-to-br from-[#7d90a8] to-[#3f5b7d]"
            }
          >
            {r.glyph}
          </button>
        ))}
      </div>
      <div className="ml-auto flex h-full items-center">
        <button type="button" className="mr-[8px]">RU</button>
        <button type="button" aria-label="Скрытые значки" className="mr-[6px]">
          <svg viewBox="0 0 8 8" className="size-[8px]"><path d="M1.500 5.500L4 3l2.500 2.500z" fill="#fff" /></svg>
        </button>
        <div className="flex gap-[5px]">
          <svg viewBox="0 0 10 10" className="size-[10px]" aria-hidden="true">
            <path d="M1.500 0v10" stroke="#fff" strokeWidth="1" />
            <path d="M2 1h6v5H2z" fill="#e9edf2" />
            <rect x="4.500" y="4.500" width="5.500" height="5.500" fill="#d22f2a" />
            <path d="M5.800 5.800l3 3m0-3l-3 3" stroke="#fff" strokeWidth="1" />
          </svg>
          <svg viewBox="0 0 10 10" className="size-[10px]" aria-hidden="true">
            <path d="M1 1.500h8V9.500H1z" fill="#e2e8ee" />
            <path d="M3 0h3v2H3z" fill="#fff" />
            <path d="M3 4h3M3 6h2M6 5v3l2-1.500z" stroke="#36506f" strokeWidth=".9" fill="none" />
          </svg>
          <svg viewBox="0 0 10 10" className="size-[10px]" aria-hidden="true">
            <path d="M2.500 2h7v5h-7z" fill="#233d5c" stroke="#fff" strokeWidth="1" />
            <path d="M0 2.500h2M1 1v4q0 1 1 1M4 9h4" stroke="#fff" strokeWidth="1" fill="none" />
          </svg>
          <svg viewBox="0 0 10 10" className="size-[10px]" aria-hidden="true">
            <path d="M0 3.500h2L5 1v8L2 6.500H0z" fill="#fff" />
            <path d="M6.500 3q1.200 2 0 4M8.300 2q2 3 0 6" stroke="#d8e0e8" strokeWidth=".8" fill="none" />
          </svg>
        </div>
        <time dateTime="2015-06-20T17:52" className="ml-[11px] text-center leading-[10px]">
          <span className="block">17:52</span>
          <span className="block">20.06.2015</span>
        </time>
        <button type="button" aria-label="Свернуть все окна" className="ml-[7px] h-full w-[8px] border-l border-[#5d7590] bg-linear-to-b from-[#3d5777] to-[#1d3557]" />
      </div>
    </footer>
  );
}

export default function App() {
  return (
    <div className="flex h-screen flex-col overflow-hidden bg-[#0a3a76] font-['Noto_Sans','Open_Sans',sans-serif] text-[7px]">
      <div className="relative flex min-h-0 flex-1 justify-between">
        <div className="grid auto-rows-[65px] grid-cols-[46px_46px] content-start">
          {desktopLeft.map((item, i) => <DesktopShortcut key={i} item={item} />)}
        </div>
        <div className="mr-[10px] flex w-[46px] flex-col justify-end">
          {desktopRight.map((item, i) => <DesktopShortcut key={i} item={item} />)}
        </div>
        <ConsoleWindow />
        <svg viewBox="0 0 12 18" className="pointer-events-none absolute top-[193px] left-[145px] h-[17px] w-[11px]" aria-hidden="true">
          <path d="M1 1v13l3-3 2.500 5.500 2.200-1L6.300 10.300H11z" fill="#fff" stroke="#222" strokeWidth=".9" />
        </svg>
      </div>
      <Taskbar />
    </div>
  );
}
